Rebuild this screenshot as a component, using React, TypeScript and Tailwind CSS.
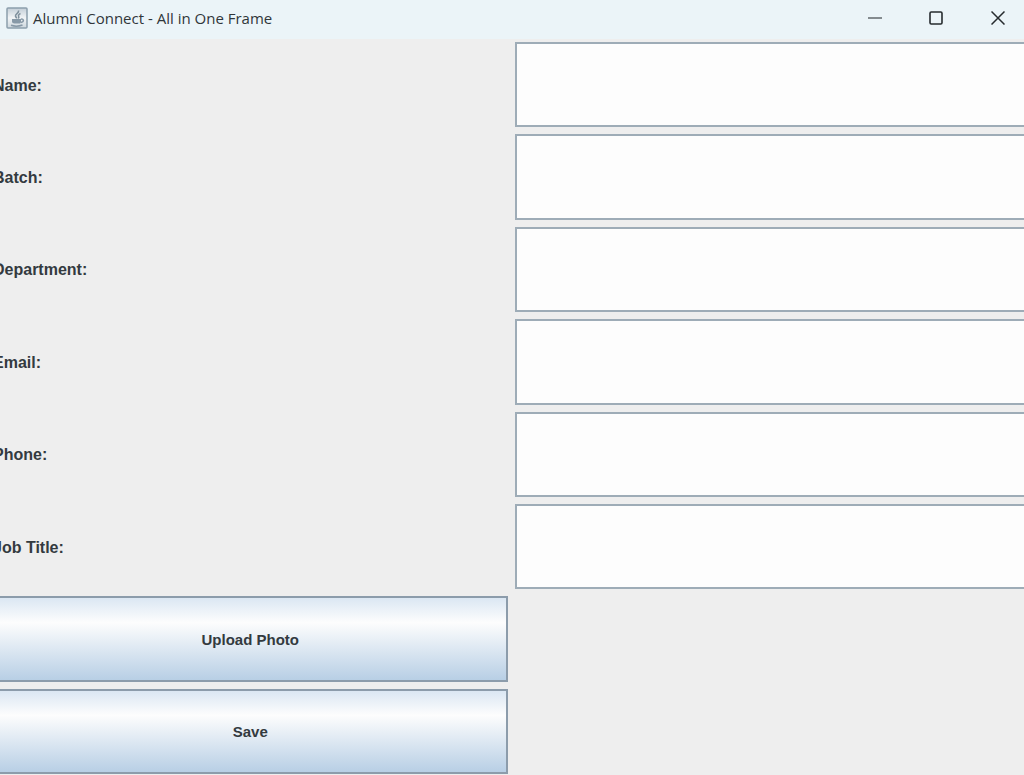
import { useState } from 'react';

const fields = [
  { id: 'name', label: 'Name:' },
  { id: 'batch', label: 'Batch:' },
  { id: 'department', label: 'Department:' },
  { id: 'email', label: 'Email:' },
  { id: 'phone', label: 'Phone:' },
  { id: 'jobTitle', label: 'Job Title:' },
];

const buttonClass =
  'border-2 border-[#8c9cab] bg-linear-to-b from-[#dbe7f3] via-[#fdfdfd] via-30% to-[#b8cfe5] pt-[2px] text-[15px] font-bold';

function JavaIcon() {
  return (
    <svg width="22" height="22" viewBox="0 0 22 22" fill="none" aria-hidden="true">
      <defs>
        <linearGradient id="tile" x1="0" y1="0" x2="0" y2="1">
          <stop offset="0" stopColor="#c3ced7" />
          <stop offset="0.5" stopColor="#f1f4f6" />
          <stop offset="1" stopColor="#ccd6dd" />
        </linearGradient>
      </defs>
      <rect x="1" y="1" width="20" height="20" rx="1" fill="url(#tile)" stroke="#8c9eac" strokeWidth="1.5" />
      {/* steam */}
      <path d="M12.500 3.500c1 2.500-3.500 3.500-3 5.500.2 1 1.200 1.500 1.200 2.500M14.500 6.500c-2 1-2.500 2-1.800 3.200.4.7 0 1.300-.4 1.800" stroke="#7f909d" strokeWidth="1.600" />
      {/* cup and saucer */}
      <path d="M6 12h9v2.500c0 1.500-1 2-2 2H8.500c-1.500 0-2.500-.8-2.500-2z" fill="#8799a7" />
      <path d="M15 12.300c3-1 3.500 2.700-.3 3.200M5 18.300c3 1 8 1 11.500-.3" stroke="#8799a7" strokeWidth="1.500" />
    </svg>
  );
}

function TitleBar() {
  return (
    <header className="flex h-[39px] shrink-0 items-start justify-between bg-[#ebf4f8] pr-px pl-[6px] text-[#30363a]">
      <div className="flex h-[36px] items-center gap-[5px]">
        <JavaIcon />
        <h1 className="font-['Open_Sans','Noto_Sans',sans-serif] text-[15px]">
          Alumni Connect - All in One Frame
        </h1>
      </div>
      <div className="flex h-[36px]">
        <button type="button" aria-label="Minimize" className="flex w-[61px] items-center justify-center">
          <svg width="14" height="14" viewBox="0 0 14 14" stroke="#62696d" strokeWidth="1.500">
            <path d="M0 7h14" />
          </svg>
        </button>
        <button type="button" aria-label="Maximize" className="flex w-[61px] items-center justify-center">
          <svg width="14" height="14" viewBox="0 0 14 14" fill="none" stroke="#262b2e" strokeWidth="1.600">
            <rect x="1" y="1" width="12" height="12" rx="1.200" />
          </svg>
        </button>
        <button type="button" aria-label="Close" className="flex w-[57px] items-center pl-[25px]">
          <svg width="14" height="14" viewBox="0 0 14 14" stroke="#262b2e" strokeWidth="1.500">
            <path d="M.5.5l13 13M13.500.5l-13 13" />
          </svg>
        </button>
      </div>
    </header>
  );
}

export default function App() {
  const [values, setValues] = useState<Record<string, string>>({});

  return (
    <div className="flex min-h-screen flex-col overflow-hidden bg-[#eeeeee] font-['Liberation_Sans',Arial,sans-serif] text-[16px] text-[#333a3f]">
      <TitleBar />
      <form
        className="-mr-[5px] -ml-[7px] grid flex-1 auto-rows-fr grid-cols-2 gap-[7px] pt-[3px] pb-px"
        onSubmit={(e) => e.preventDefault()}
      >
        {fields.map((field) => (
          <div key={field.id} className="col-span-2 grid grid-cols-2 gap-[7px]">
            <label htmlFor={field.id} className="flex items-center pt-[2px] font-bold">
              {field.label}
            </label>
            <input
              id={field.id}
              type="text"
              value={values[field.id] ?? ''}
              onChange={(e) => setValues({ ...values, [field.id]: e.target.value })}
              className="min-w-0 border-2 border-[#9eacb7] bg-[#fdfdfd] px-1 outline-none"
            />
          </div>
        ))}
        <button type="button" className={`col-start-1 ${buttonClass}`}>
          Upload Photo
        </button>
        <button type="submit" className={`col-start-1 ${buttonClass}`}>
          Save
        </button>
      </form>
    </div>
  );
}
